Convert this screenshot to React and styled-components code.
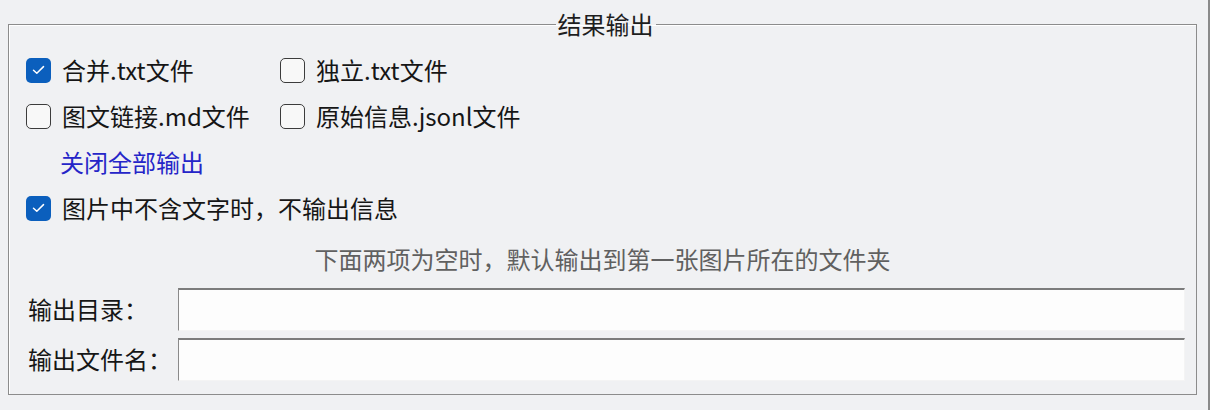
import React, { useState } from "react";
import styled, { createGlobalStyle } from "styled-components";

const Global = createGlobalStyle`
  html, body { margin: 0; padding: 0; background: #f0f0f0; }
  body { font-family: "Noto Sans CJK SC", "Noto Sans", sans-serif; }
`;

const Window = styled.div`
  width: 1210px;
  height: 410px;
  box-sizing: border-box;
  padding: 12px 0 0 8px;
  background: #f0f1f3;
  border-right: 2px solid #8a8a8a;
`;

const Frame = styled.fieldset`
  margin: 0;
  width: 1189px;
  box-sizing: border-box;
  border: 1px solid #8c8c8c;
  box-shadow: inset 1px 1px 0 #ffffff;
  padding: 11px 11px 13px 17px;
  display: flex;
  flex-direction: column;
`;

const Legend = styled.legend`
  margin: 0 auto;
  padding: 0 2px;
  font-size: 24px;
  line-height: 24px;
  color: #1e1e1e;
`;

const CheckGrid = styled.div`
  display: grid;
  grid-template-columns: 254px auto;
`;

const Row = styled.label`
  display: flex;
  align-items: center;
  height: 46px;
  gap: 11px;
  font-size: 24px;
  color: #161616;
  cursor: default;
  white-space: nowrap;
`;

const RowText = styled.span`
  padding-bottom: 2px;
`;

const Box = styled.span`
  width: 25px;
  height: 25px;
  box-sizing: border-box;
  border-radius: 5px;
  display: flex;
  align-items: center;
  justify-content: center;
  flex: none;
  background: ${(p) => (p.$checked ? "#0b5fbd" : "#f8f8f8")};
  border: ${(p) => (p.$checked ? "none" : "1.5px solid #3c3c3c")};
`;

const Link = styled.a`
  display: flex;
  align-items: center;
  height: 46px;
  margin-left: 34px;
  padding-bottom: 2px;
  box-sizing: border-box;
  font-size: 24px;
  color: #2525c8;
  text-decoration: none;
  cursor: pointer;
`;

const Hint = styled.div`
  margin-top: 15px;
  height: 28px;
  line-height: 26px;
  text-align: center;
  font-size: 24px;
  color: #606060;
  padding-right: 6px;
`;

const FieldRow = styled.div`
  display: grid;
  grid-template-columns: 150px 1fr;
  align-items: center;
  height: 43px;
  margin-top: ${(p) => p.$mt}px;
  margin-left: 2px;
`;

const FieldLabel = styled.span`
  font-size: 24px;
  color: #161616;
  white-space: nowrap;
  padding-bottom: 2px;
`;

const Input = styled.input`
  height: 43px;
  box-sizing: border-box;
  border: none;
  border-top: 2px solid #7c7c7c;
  border-left: 1px solid #8a8a8a;
  border-right: 1px solid #f4f4f4;
  border-bottom: 1px solid #f4f4f4;
  background: #fdfdfd;
  outline: none;
  font-size: 22px;
  font-family: inherit;
  padding: 0 6px;
`;

const Check = () => (
  <svg width="13" height="10" viewBox="0 0 13 10">
    <path d="M1.5 5.2 L4.8 8.3 L11.5 1.6" fill="none" stroke="#ffffff" strokeWidth="1.5" strokeLinecap="round" strokeLinejoin="round" />
  </svg>
);

const CheckItem = ({ label, initial }) => {
  const [on, setOn] = useState(initial);
  return (
    <Row onClick={() => setOn(!on)}>
      <Box $checked={on}>{on && <Check />}</Box>
      <RowText>{label}</RowText>
    </Row>
  );
};

export default function App() {
  return (
    <>
      <Global />
      <Window>
        <Frame>
          <Legend>结果输出</Legend>
          <CheckGrid>
            <CheckItem label="合并.txt文件" initial={true} />
            <CheckItem label="独立.txt文件" initial={false} />
            <CheckItem label="图文链接.md文件" initial={false} />
            <CheckItem label="原始信息.jsonl文件" initial={false} />
          </CheckGrid>
          <Link>关闭全部输出</Link>
          <CheckItem label="图片中不含文字时，不输出信息" initial={true} />
          <Hint>下面两项为空时，默认输出到第一张图片所在的文件夹</Hint>
          <FieldRow $mt={14}>
            <FieldLabel>输出目录：</FieldLabel>
            <Input />
          </FieldRow>
          <FieldRow $mt={7}>
            <FieldLabel>输出文件名：</FieldLabel>
            <Input />
          </FieldRow>
        </Frame>
      </Window>
    </>
  );
}
